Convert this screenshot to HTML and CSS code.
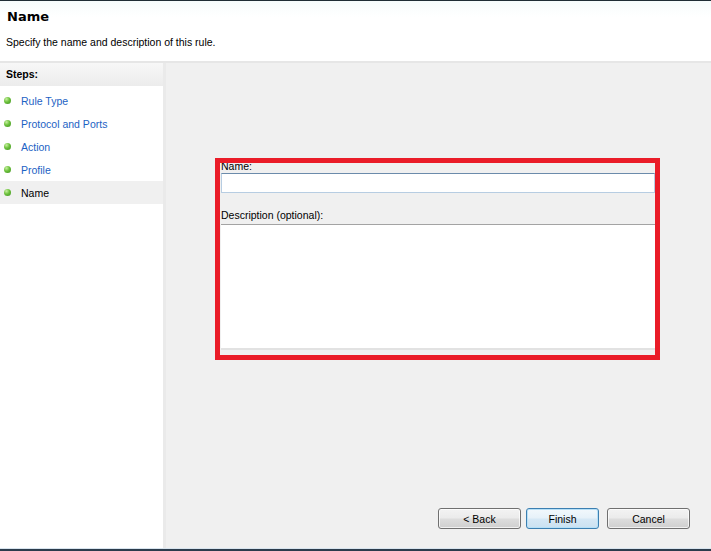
FILE: index.html
```html
<!DOCTYPE html>
<html>
<head>
<meta charset="utf-8">
<link rel="stylesheet" href="styles.css">
</head>
<body>
<div class="window">
  <header class="header">
    <div class="title">Name</div>
    <div class="subtitle">Specify the name and description of this rule.</div>
  </header>
  <div class="main">
    <aside class="steps">
      <div class="steps-head">Steps:</div>
      <ul class="step-list">
        <li class="step"><span class="dot"></span><span class="link">Rule Type</span></li>
        <li class="step"><span class="dot"></span><span class="link">Protocol and Ports</span></li>
        <li class="step"><span class="dot"></span><span class="link">Action</span></li>
        <li class="step"><span class="dot"></span><span class="link">Profile</span></li>
        <li class="step current"><span class="dot"></span><span>Name</span></li>
      </ul>
    </aside>
    <section class="content">
      <div class="form">
        <label class="lbl">Name:</label>
        <div class="input"></div>
        <label class="lbl desc">Description (optional):</label>
        <div class="textarea"></div>
      </div>
      <div class="buttons">
        <button class="btn back">&lt; Back</button>
        <button class="btn finish">Finish</button>
        <button class="btn cancel">Cancel</button>
      </div>
    </section>
  </div>
  <div class="bottom-bar"></div>
  <div class="highlight"></div>
</div>
</body>
</html>
```

FILE: styles.css
```css
* { box-sizing: border-box; }
html, body { margin: 0; padding: 0; }
body {
  width: 711px;
  height: 551px;
  overflow: hidden;
  background: #f0f0f0;
  font-family: "Liberation Sans", Arial, sans-serif;
  font-size: 10.5px;
  color: #000;
}
.window {
  position: relative;
  width: 711px;
  height: 551px;
  display: flex;
  flex-direction: column;
}
.header {
  height: 63px;
  background: linear-gradient(#f6fcfc 0px, #ffffff 16px);
  border-top: 1px solid #1f2d35;
  border-bottom: 2px solid #e6e6e6;
  padding: 0 0 0 7px;
  flex: none;
}
.title {
  font-family: "DejaVu Sans", sans-serif;
  font-weight: bold;
  font-size: 13px;
  line-height: 16px;
  margin-top: 8px;
}
.subtitle {
  margin-top: 10px;
  margin-left: -1px;
  line-height: 14px;
}
.main {
  flex: 1;
  display: flex;
  min-height: 0;
}
.steps {
  width: 166px;
  flex: none;
  background: #fff;
  border-right: 3px solid #eaeaea;
}
.steps-head {
  height: 23px;
  line-height: 23px;
  padding-left: 6px;
  font-weight: bold;
  background: linear-gradient(#f7f7f7, #ececec);
}
.step-list {
  list-style: none;
  margin: 3px 0 0 0;
  padding: 0;
}
.step {
  height: 23px;
  display: flex;
  align-items: center;
  padding-left: 4px;
}
.step.current { background: #f0f0f0; }
.dot {
  width: 7px;
  height: 7px;
  border-radius: 50%;
  background: radial-gradient(circle at 35% 30%, #c8f0a0 0%, #6cc13c 45%, #3e8f1e 100%);
  margin-right: 10px;
  flex: none;
}
.link { color: #1c62c4; }
.content {
  flex: 1;
  display: flex;
  flex-direction: column;
  padding: 96px 21px 19px 55px;
}
.form {
  width: 434px;
}
.lbl {
  display: block;
  line-height: 14px;
}
.input {
  height: 20px;
  background: #fff;
  border: 1px solid #b7cde2;
  border-top-color: #6b8bab;
}
.lbl.desc { margin-top: 15px; }
.textarea {
  margin-top: 2px;
  height: 126px;
  background: #fff;
  border-top: 1px solid #a3a3a3;
  border-bottom: 2px solid #e2e2e2;
}
.buttons {
  margin-top: auto;
  display: flex;
  justify-content: flex-end;
}
.btn {
  height: 21px;
  font-family: "Liberation Sans", Arial, sans-serif;
  font-size: 10.5px;
  color: #000;
  border: 1px solid #707070;
  border-radius: 3px;
  background: linear-gradient(#f3f3f3 0%, #ebebeb 48%, #dddddd 52%, #cfcfcf 100%);
  padding: 0;
  box-shadow: inset 0 0 0 1px rgba(255,255,255,0.7);
}
.back { width: 83px; }
.finish {
  width: 73px;
  margin-left: 5px;
  border-color: #3c7fb1;
  background: linear-gradient(#f2f8fc 0%, #e6f1f9 48%, #d6e8f5 52%, #cbe1f1 100%);
  box-shadow: inset 0 0 0 1px #b7e0f7;
}
.cancel { width: 83px; margin-left: 8px; }
.bottom-bar {
  height: 3px;
  flex: none;
  background: #2b3c4c;
  border-top: 1px solid #d8e4ee;
}
.highlight {
  position: absolute;
  left: 215px;
  top: 158px;
  width: 445px;
  height: 202px;
  border: 5px solid #ea1c28;
  pointer-events: none;
}
```
